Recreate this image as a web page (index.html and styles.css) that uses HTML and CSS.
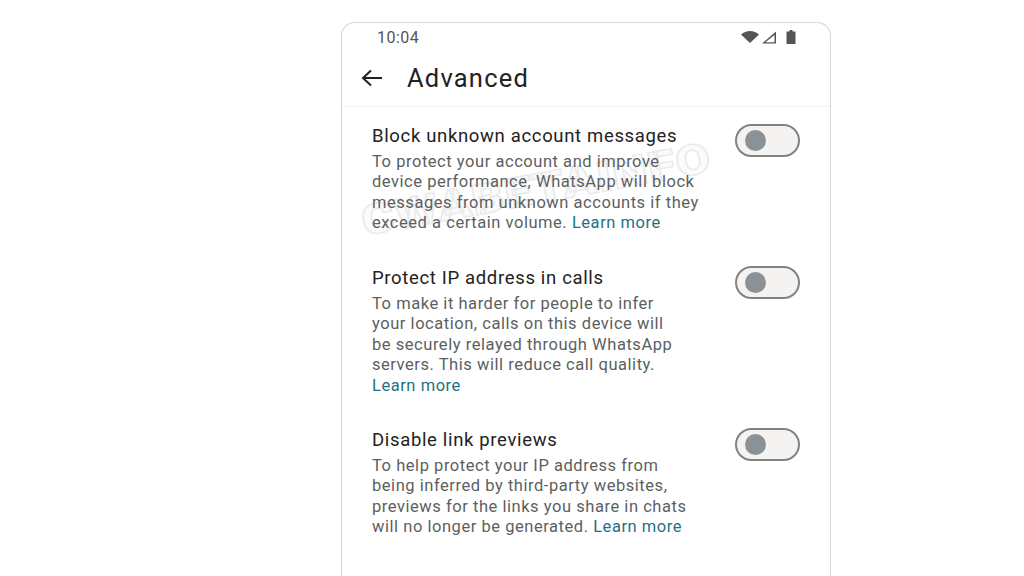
FILE: index.html
```html
<!DOCTYPE html>
<html lang="en">
<head>
<meta charset="utf-8">
<title>Advanced</title>
<link rel="stylesheet" href="styles.css">
</head>
<body>
<main class="phone">
  <div class="status">
    <span class="time">10:04</span>
    <span class="status-icons">
      <svg width="18" height="12" viewBox="0 0 18 12"><path d="M0 3.500C2.500 1.200 5.600 0 9 0s6.500 1.200 9 3.500L9 12z" fill="#555"/></svg>
      <svg width="16" height="13" viewBox="0 0 16 13"><path d="M15 .5V12.500H1zM13.500 4L4.400 11.200H13.500z" fill="#555" fill-rule="evenodd"/></svg>
      <svg class="battery" width="10" height="14" viewBox="0 0 10 14"><path d="M3.500 0H6.500V1.500H9.500V14H.5V1.500H3.500z" fill="#555"/></svg>
    </span>
  </div>
  <header class="appbar">
    <svg class="back" width="24" height="20" viewBox="0 0 24 20"><path d="M22 10H3M11 2.500L3 10l8 7.500" fill="none" stroke="#222" stroke-width="2"/></svg>
    <h1 class="page-title">Advanced</h1>
  </header>
  <section class="settings">
    <span class="watermark">CWABETAINFO</span>
    <article class="row row-block">
      <div class="copy">
        <h2 class="title">Block unknown account messages</h2>
        <p class="desc">To protect your account and improve<br>device performance, WhatsApp will block<br>messages from unknown accounts if they<br>exceed a certain volume. <a class="link">Learn more</a></p>
      </div>
      <span class="toggle"><span class="knob"></span></span>
    </article>
    <article class="row row-ip">
      <div class="copy">
        <h2 class="title">Protect IP address in calls</h2>
        <p class="desc">To make it harder for people to infer<br>your location, calls on this device will<br>be securely relayed through WhatsApp<br>servers. This will reduce call quality.<br><a class="link">Learn more</a></p>
      </div>
      <span class="toggle"><span class="knob"></span></span>
    </article>
    <article class="row row-link">
      <div class="copy">
        <h2 class="title">Disable link previews</h2>
        <p class="desc">To help protect your IP address from<br>being inferred by third-party websites,<br>previews for the links you share in chats<br>will no longer be generated. <a class="link">Learn more</a></p>
      </div>
      <span class="toggle"><span class="knob"></span></span>
    </article>
  </section>
</main>
</body>
</html>
```
FILE: styles.css
```css
* { box-sizing: border-box; }
html, body { margin: 0; height: 576px; overflow: hidden; background: #fff; }
body { font-family: Roboto, "Liberation Sans", sans-serif; padding: 22px 0 0 341px; }
.phone {
  width: 490px; height: 554px;
  border: 1px solid #d6d6d6; border-bottom: 0;
  border-radius: 14px 14px 0 0;
  background: #fff;
}
.status {
  display: flex; justify-content: space-between; align-items: center;
  height: 28px; padding: 0 34px 0 35px;
}
.time { font-size: 16px; letter-spacing: .5px; color: #555; }
.status-icons { display: flex; align-items: center; gap: 2px; }
.battery { margin-left: 7px; }
.appbar {
  display: flex; align-items: center; gap: 23px;
  height: 56px; padding: 0 0 2px 18px;
  border-bottom: 1px solid #f3f3f3;
}
.page-title { margin: 0; font-size: 25.500px; font-weight: 400; color: #222; letter-spacing: 1.200px; }
.settings { position: relative; padding-left: 30px; }
.row { position: relative; display: flex; justify-content: space-between; padding-right: 30px; }
.row-block { padding-top: 17px; height: 142px; }
.row-ip { padding-top: 17px; height: 162px; }
.row-link { padding-top: 17px; }
.title { margin: 0 0 3.500px; font-size: 18.500px; line-height: 24px; font-weight: 400; color: #222; letter-spacing: .66px; }
.desc { margin: 0; font-size: 16.500px; line-height: 20.600px; color: #5c5f61; letter-spacing: .54px; }
.link { color: #1f7182; }
.toggle {
  display: flex; align-items: center; flex: none;
  width: 65px; height: 33px; padding-left: 8px;
  border: 2px solid #808384; border-radius: 17px; background: #f5f3f1;
}
.knob { width: 21px; height: 21px; border-radius: 50%; background: #8a9197; }
.watermark {
  position: absolute; left: 20px; top: 94px;
  font-size: 42px; font-weight: 900; line-height: 1; letter-spacing: 1px;
  color: #fbfbfb; -webkit-text-stroke: 1.500px #ebebeb;
  transform: rotate(-10.500deg) scaleX(1.18); transform-origin: 0 50%;
  white-space: nowrap;
}
```
